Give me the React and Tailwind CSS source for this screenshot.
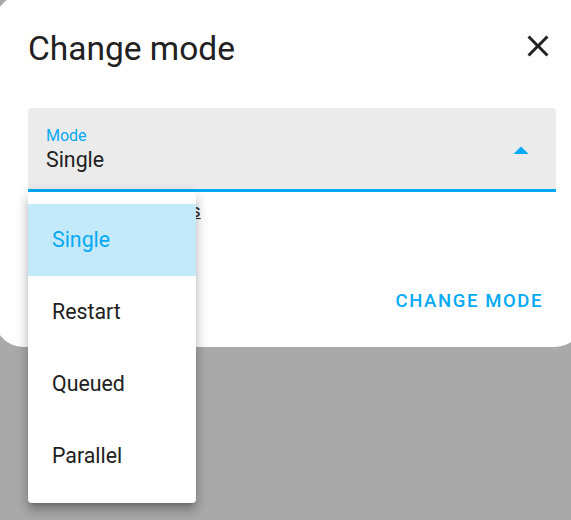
import React from "react";

const modes = ["Single", "Restart", "Queued", "Parallel"];

export default function App() {
  return (
    <div className="relative w-[571px] h-[520px] overflow-hidden bg-[#a9a9a9] font-['Roboto',sans-serif] text-[#212121]">
      {/* dialog */}
      <div className="absolute left-[-5px] top-[-5px] w-[588px] h-[352px] rounded-[28px] bg-white pl-[33px] pr-[27px] pt-[34px] flex flex-col">
        <div className="flex items-start justify-between h-[40px]">
          <h2 className="text-[33.5px] leading-[40px] font-normal">Change mode</h2>
          <svg viewBox="0 0 24 24" className="w-[36px] h-[36px] mt-[-1px] fill-[#212121]">
            <path d="M19,6.41L17.59,5L12,10.59L6.41,5L5,6.41L10.59,12L5,17.59L6.41,19L12,13.41L17.59,19L19,17.59L13.41,12L19,6.41Z" />
          </svg>
        </div>

        {/* select field */}
        <div className="mt-[39px] h-[84px] rounded-t-[4px] bg-[#ebebeb] border-b-[3px] border-[#03a9f4] flex items-center justify-between">
          <div className="pl-[18px] self-start pt-[18px]">
            <div className="text-[16px] leading-[20px] text-[#03a9f4]">Mode</div>
            <div className="text-[21.33px] leading-[28px]">Single</div>
          </div>
          <svg viewBox="0 0 16 8" className="w-[16px] h-[8px] mr-[27px] mt-[2px] fill-[#03a9f4]">
            <path d="M0.5 8L8 0.5L15.5 8Z" />
          </svg>
        </div>

        <a className="mt-[7px] ml-[12px] text-[18.67px] leading-[24px] underline text-[#212121]">Learn about modes</a>

        <button className="mt-[60px] self-end pr-[13px] text-[18.5px] leading-[36px] font-medium tracking-[1.6px] text-[#03a9f4]">
          CHANGE MODE
        </button>
      </div>

      {/* dropdown menu */}
      <div className="absolute left-[28px] top-[192px] w-[168px] h-[311px] rounded-[4px] bg-white py-[12px] shadow-[0_5px_5px_-3px_rgba(0,0,0,0.2),0_8px_10px_1px_rgba(0,0,0,0.14),0_3px_14px_2px_rgba(0,0,0,0.12)]">
        {modes.map((m, i) => (
          <div
            key={m}
            className={
              i === 0
                ? "h-[72px] flex items-center pl-[24px] bg-[#c4e9fb] text-[#03a9f4] text-[21.33px] leading-[28px]"
                : "h-[72px] flex items-center pl-[24px] text-[#212121] text-[21.33px] leading-[28px]"
            }
          >
            {m}
          </div>
        ))}
      </div>
    </div>
  );
}
